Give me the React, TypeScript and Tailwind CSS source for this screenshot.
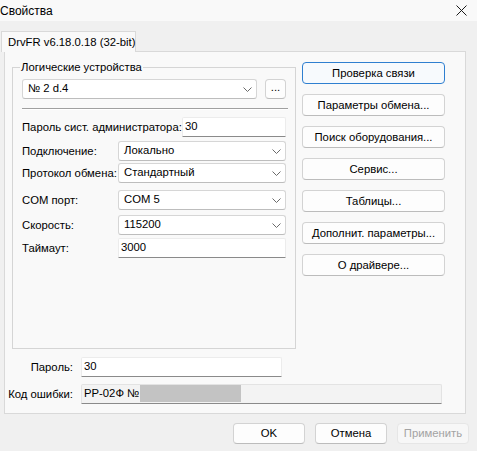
import React from 'react';

const font = { fontFamily: '"Liberation Sans", Arial, sans-serif' };

const Chevron: React.FC = () => (
  <svg width="9" height="5" viewBox="0 0 9 5" className="shrink-0">
    <path d="M0.5 0.5 L4.5 4.5 L8.5 0.5" fill="none" stroke="#6a6a6a" strokeWidth="1" />
  </svg>
);

const Combo: React.FC<{ value: string; className?: string }> = ({ value, className = '' }) => (
  <div
    className={`h-[20px] flex items-center justify-between pl-[5px] pr-[4px] bg-white border border-[#d6d6d6] border-b-[#bdbdbd] rounded-[3px] ${className}`}
  >
    <span className="leading-none whitespace-nowrap">{value}</span>
    <Chevron />
  </div>
);

const Edit: React.FC<{ value: string; className?: string }> = ({ value, className = '' }) => (
  <div
    className={`h-[20px] flex items-center pl-[2px] bg-white border border-[#ececec] border-b-[#8a8a8a] rounded-t-[2px] ${className}`}
  >
    <span className="leading-none">{value}</span>
  </div>
);

const Btn: React.FC<{ label: string; primary?: boolean; disabled?: boolean; className?: string }> = ({
  label,
  primary,
  disabled,
  className = '',
}) => (
  <div
    className={`flex items-center justify-center whitespace-nowrap rounded-[4px] border ${
      primary
        ? 'border-[#2f7fd0] bg-[#f7fafd]'
        : disabled
        ? 'border-[#e6e6e6] bg-[#f7f7f7] text-[#a3a3a3]'
        : 'border-[#d3d3d3] border-b-[#bcbcbc] bg-[#fdfdfd]'
    } ${className}`}
  >
    {label}
  </div>
);

const FieldRow: React.FC<{ label: string; className?: string; children: React.ReactNode }> = ({
  label,
  className = '',
  children,
}) => (
  <div className={`flex items-center ${className}`}>
    <span className="w-[96px] shrink-0 whitespace-nowrap">{label}</span>
    {children}
  </div>
);

export default function App() {
  return (
    <div style={font} className="w-[477px] h-[451px] bg-[#f0f0f0] text-[11.3px] text-black overflow-hidden relative">
      {/* window caption */}
      <div className="h-[21px] bg-[#f9f9f9] flex items-center justify-between">
        <span className="text-[12px]">Свойства</span>
        <svg width="11" height="11" viewBox="0 0 11 11" className="mr-[10px]">
          <path d="M0.5 0.5 L10.5 10.5 M10.5 0.5 L0.5 10.5" stroke="#1a1a1a" strokeWidth="1" />
        </svg>
      </div>

      {/* tab header */}
      <div className="pt-[10px] pl-[1px]">
        <div className="relative z-10 -mb-px w-[135px] h-[21px] flex items-center pl-[6px] whitespace-nowrap bg-[#f9f9f9] border border-b-0 border-[#d9d9d9]">
          DrvFR v6.18.0.18 (32-bit)
        </div>
      </div>

      {/* tab sheet */}
      <div className="ml-[4px] w-[462px] h-[363px] bg-[#f9f9f9] border border-[#d9d9d9] flex flex-col">
        <div className="flex pl-[7px] pt-[10px]">
          {/* logical devices group */}
          <div className="relative mt-[5px] w-[284px] h-[282px] border border-[#d5d5d5] px-[9px] pt-[11px]">
            <span className="absolute top-[-9px] left-[7px] px-[1px] bg-[#f9f9f9] whitespace-nowrap">Логические устройства</span>
            <div className="flex items-center">
              <Combo value="№ 2 d.4" className="w-[236px]" />
              <Btn label="..." className="ml-[8px] w-[21px] h-[20px] pb-[3px]" />
            </div>
            <div className="mt-[9px] w-[266px] border-t border-[#a0a0a0] border-b border-b-white" />

            <div className="flex items-center mt-[7px]">
              <span className="w-[160px] shrink-0 whitespace-nowrap">Пароль сист. администратора:</span>
              <Edit value="30" className="w-[105px]" />
            </div>
            <FieldRow label="Подключение:" className="mt-[4px]">
              <Combo value="Локально" className="w-[169px]" />
            </FieldRow>
            <FieldRow label="Протокол обмена:" className="mt-[2px]">
              <Combo value="Стандартный" className="w-[169px]" />
            </FieldRow>
            <FieldRow label="COM порт:" className="mt-[7px]">
              <Combo value="COM 5" className="w-[169px]" />
            </FieldRow>
            <FieldRow label="Скорость:" className="mt-[5px]">
              <Combo value="115200" className="w-[169px]" />
            </FieldRow>
            <FieldRow label="Таймаут:" className="mt-[3px]">
              <Edit value="3000" className="w-[169px]" />
            </FieldRow>
          </div>

          {/* action buttons */}
          <div className="ml-[6px] w-[143px] flex flex-col gap-[10px]">
            <Btn label="Проверка связи" primary className="h-[22px]" />
            <Btn label="Параметры обмена..." className="h-[22px]" />
            <Btn label="Поиск оборудования..." className="h-[22px]" />
            <Btn label="Сервис..." className="h-[22px]" />
            <Btn label="Таблицы..." className="h-[22px]" />
            <Btn label="Дополнит. параметры..." className="h-[22px]" />
            <Btn label="О драйвере..." className="h-[22px]" />
          </div>
        </div>

        <div className="flex items-center mt-[8px]">
          <span className="w-[68px] text-right">Пароль:</span>
          <Edit value="30" className="ml-[8px] w-[201px] h-[19px]" />
        </div>
        <div className="flex items-center mt-[7px]">
          <span className="w-[68px] text-right whitespace-nowrap">Код ошибки:</span>
          <div className="ml-[8px] w-[361px] h-[20px] flex items-center bg-[#f3f3f3] border border-[#e3e3e3] border-b-[#8a8a8a] rounded-t-[2px]">
            <span className="w-[58px] shrink-0 pl-[2px] leading-none whitespace-nowrap">РР-02Ф №</span>
            <div className="w-[101px] h-[17px] self-start bg-[#c3c3c3]" />
          </div>
        </div>
      </div>

      {/* dialog buttons */}
      <div className="flex justify-end gap-[10px] pr-[8px] mt-[9px]">
        <Btn label="OK" className="w-[72px] h-[21px]" />
        <Btn label="Отмена" className="w-[72px] h-[21px]" />
        <Btn label="Применить" disabled className="w-[72px] h-[21px]" />
      </div>
    </div>
  );
}
